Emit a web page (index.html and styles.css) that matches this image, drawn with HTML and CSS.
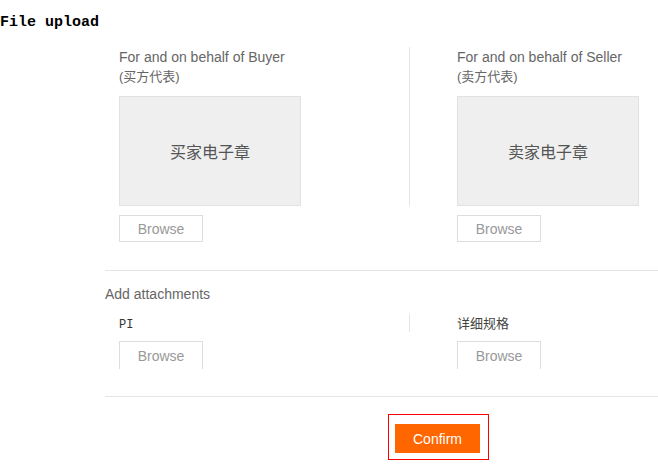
FILE: index.html
```html
<!DOCTYPE html>
<html lang="en">
<head>
<meta charset="utf-8">
<title>File upload</title>
<link rel="stylesheet" href="styles.css">
</head>
<body>
<h1 class="title">File upload</h1>
<div class="form">
  <section class="row sign-row">
    <div class="cell cell-left">
      <div class="head">
        <p class="label">For and on behalf of Buyer</p>
        <p class="sub">(买方代表)</p>
        <div class="seal">买家电子章</div>
      </div>
      <button class="browse" type="button">Browse</button>
    </div>
    <div class="cell cell-right">
      <div class="head">
        <p class="label">For and on behalf of Seller</p>
        <p class="sub">(卖方代表)</p>
        <div class="seal">卖家电子章</div>
      </div>
      <button class="browse" type="button">Browse</button>
    </div>
  </section>
  <section class="attach">
    <p class="attach-title">Add attachments</p>
    <div class="row attach-row">
      <div class="cell cell-left">
        <div class="head small-head"><span class="mono">PI</span></div>
        <button class="browse browse-cut" type="button">Browse</button>
      </div>
      <div class="cell cell-right">
        <div class="head small-head"><span class="cn">详细规格</span></div>
        <button class="browse browse-cut" type="button">Browse</button>
      </div>
    </div>
  </section>
  <div class="actions">
    <div class="confirm-frame">
      <button class="confirm" type="button">Confirm</button>
    </div>
  </div>
</div>
</body>
</html>
```
FILE: styles.css
```css
html, body {
  margin: 0;
  padding: 0;
  background: #ffffff;
}

body {
  font-family: "Liberation Sans", "Noto Sans CJK SC", sans-serif;
  color: #666666;
}

.title {
  margin: 14px 0 0;
  font: bold 15px/17px "Liberation Mono", monospace;
  color: #000000;
}

.form {
  margin: 16px 0 0 105px;
}

.row {
  display: grid;
  grid-template-columns: 305px 1fr;
}

.cell-left {
  padding-left: 14px;
}

.cell-left .head {
  border-right: 1px solid #e6e6e6;
}

.cell-right {
  padding-left: 47px;
}

.sign-row {
  padding-bottom: 28px;
  border-bottom: 1px solid #e5e5e5;
}

.label {
  margin: 0;
  font-size: 14px;
  line-height: 20px;
  color: #666666;
}

.sub {
  margin: 0;
  font-size: 13px;
  line-height: 20px;
  color: #666666;
}

.seal {
  box-sizing: border-box;
  margin-top: 9px;
  width: 182px;
  height: 110px;
  background: #efefef;
  border: 1px solid #e2e2e2;
  display: flex;
  align-items: center;
  justify-content: center;
  font-size: 16px;
  color: #555555;
}

.browse {
  box-sizing: border-box;
  display: block;
  margin-top: 9px;
  width: 84px;
  height: 27px;
  padding: 0;
  background: #ffffff;
  border: 1px solid #dddddd;
  font: 14px "Liberation Sans", sans-serif;
  color: #999999;
}

.browse-cut {
  height: 28px;
  border-bottom: none;
  padding-top: 1px;
}

.attach {
  padding: 13px 0 27px;
  border-bottom: 1px solid #e5e5e5;
}

.attach-title {
  margin: 0;
  font-size: 14px;
  line-height: 20px;
  color: #666666;
}

.attach-row {
  margin-top: 10px;
}

.small-head {
  height: 18px;
  line-height: 18px;
}

.mono {
  font: 12px/18px "Liberation Mono", monospace;
  color: #333333;
}

.cn {
  font-size: 13px;
  color: #444444;
}

.actions {
  padding-top: 17px;
}

.confirm-frame {
  display: inline-block;
  margin-left: 283px;
  padding: 9px 8px 6px 6px;
  border: 1px solid #ff0000;
}

.confirm {
  display: block;
  width: 85px;
  height: 29px;
  padding: 0;
  border: none;
  background: #ff6600;
  color: #ffffff;
  font: 14px "Liberation Sans", sans-serif;
}
```
